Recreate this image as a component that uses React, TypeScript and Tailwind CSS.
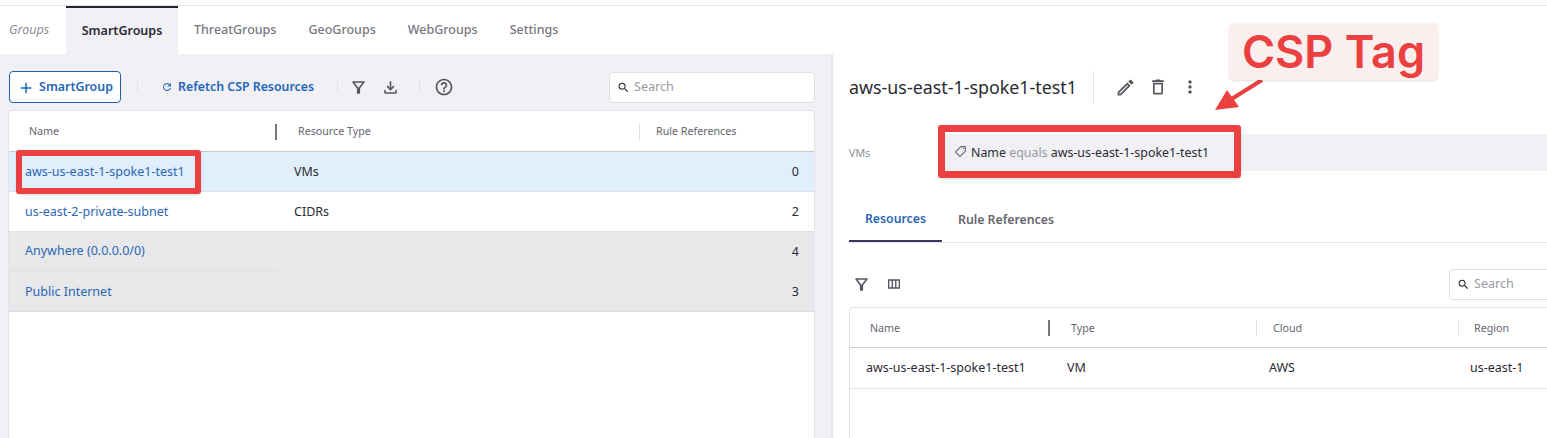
import {
  MdAdd,
  MdHelpOutline,
  MdMoreVert,
  MdOutlineDelete,
  MdOutlineEdit,
  MdOutlineFileDownload,
  MdOutlineFilterAlt,
  MdOutlineLocalOffer,
  MdOutlineViewColumn,
  MdRefresh,
  MdSearch,
} from "react-icons/md";

const font = "font-['Noto_Sans',sans-serif]";

function Divider({ className }: { className: string }) {
  return <div className={"w-px shrink-0 bg-[#dfdfe4] " + className} />;
}

function SearchBox({ className }: { className: string }) {
  return (
    <div className={"flex h-[31px] items-center gap-[4px] rounded-[4px] border border-[#dedee3] bg-white pl-[7px] " + className}>
      <MdSearch size={13} className="text-[#2b2b33]" />
      <span className="pt-[1px] text-[12.6px] text-[#9a9aa2]">Search</span>
    </div>
  );
}

const groups = [
  { name: "aws-us-east-1-spoke1-test1", type: "VMs", refs: 0, bg: "bg-[#e1eefb]", line: "border-[#e2e2e6]", nameLine: "" },
  { name: "us-east-2-private-subnet", type: "CIDRs", refs: 2, bg: "bg-white", line: "border-[#e2e2e6]", nameLine: "" },
  { name: "Anywhere (0.0.0.0/0)", type: "", refs: 4, bg: "bg-[#e8e8ea]", line: "border-transparent", nameLine: "border-b border-[#dfdfe2]" },
  { name: "Public Internet", type: "", refs: 3, bg: "bg-[#e8e8ea]", line: "border-[#dedee2]", nameLine: "" },
];

export default function App() {
  return (
    <div className={"relative flex h-[438px] w-[1547px] flex-col overflow-hidden bg-white text-[#2b2b33] " + font}>
      <div className="mt-[5px] h-px bg-[#e4e4e6]" />

      {/* tabs */}
      <div className="flex h-[48px] items-center text-[12.5px]">
        <span className="w-[66px] pl-[9px] pt-[1px] italic text-[#8d8d95]">Groups</span>
        <div className="flex h-full w-[112px] items-center justify-center border-t-2 border-[#23233a] bg-[#f0f0f5] font-semibold text-[#2b2b33]">
          SmartGroups
        </div>
        <div className="ml-[16px] flex gap-[32px] pt-[1px] font-medium text-[#77777f]">
          <span>ThreatGroups</span>
          <span>GeoGroups</span>
          <span>WebGroups</span>
          <span>Settings</span>
        </div>
      </div>

      <div className="flex flex-1">
        {/* left panel */}
        <div className="flex w-[833px] flex-col border-r-2 border-[#e6e6ee] bg-[#f0f0f5] pl-[9px] pr-[16px] pt-[17px]">
          <div className="flex h-[39px] items-center pb-[7px]">
            <div className="flex h-[32px] w-[112px] items-center justify-center rounded-[4px] border border-[#1f5fb0] bg-white pt-[1px] text-[12.4px] font-semibold text-[#2266bb]">
              <MdAdd size={18} className="mr-[4px]" />
              SmartGroup
            </div>
            <Divider className="ml-[16px] h-[12px]" />
            <div className="ml-[23px] flex items-center gap-[5px] pt-[1px] text-[12.35px] font-semibold text-[#2266bb]">
              <MdRefresh size={12} />
              Refetch CSP Resources
            </div>
            <Divider className="ml-[23px] h-[12px]" />
            <MdOutlineFilterAlt size={19} className="ml-[11px] text-[#55555e]" />
            <MdOutlineFileDownload size={19} className="ml-[13px] text-[#55555e]" />
            <Divider className="ml-[19px] h-[12px]" />
            <MdHelpOutline size={20} className="ml-[14px] text-[#55555e]" />
            <SearchBox className="ml-auto w-[206px]" />
          </div>

          <div className="-ml-[1px] flex-1 rounded-t-[4px] border-l border-r border-t border-[#e2e2e8] bg-white">
            <div className="flex h-[41px] items-center border-b border-[#c9cbd4] pt-[1px] text-[10.7px] text-[#66666e]">
              <span className="w-[266px] pl-[20px]">Name</span>
              <div className="h-[16px] w-[2px] bg-[#77777f]" />
              <span className="w-[362px] pl-[21px]">Resource Type</span>
              <Divider className="h-[16px]" />
              <span className="pl-[16px]">Rule References</span>
            </div>
            {groups.map((g) => (
              <div key={g.name} className={"flex h-[40px] items-stretch border-b text-[12.5px] " + g.bg + " " + g.line}>
                <span className={"flex w-[269px] items-center pl-[16px] pt-[1px] text-[#2a67b5] " + g.nameLine}>{g.name}</span>
                <span className="flex flex-1 items-center pl-[16px] pt-[1px] text-[#2b2b33]">{g.type}</span>
                <span className="flex items-center pr-[15px] pt-[1px] text-[#2b2b33]">{g.refs}</span>
              </div>
            ))}
          </div>
        </div>

        {/* right panel */}
        <div className="flex flex-1 flex-col pl-[16px]">
          <div className="flex h-[66px] items-center">
            <span className="w-[244px] text-[17.85px] text-[#2b2b33]">aws-us-east-1-spoke1-test1</span>
            <Divider className="h-[32px]" />
            <MdOutlineEdit size={21} className="ml-[21px] text-[#55555e]" />
            <MdOutlineDelete size={20} className="ml-[12px] text-[#55555e]" />
            <MdMoreVert size={20} className="ml-[12px] text-[#55555e]" />
          </div>

          <div className="mt-[14px] flex h-[37px] items-center text-[10.7px]">
            <span className="w-[91px] pt-[1px] text-[#8d8d95]">VMs</span>
            <div className="flex h-full flex-1 items-center bg-[#f0f0f5] pl-[14px] text-[12.4px]">
              <MdOutlineLocalOffer size={13} className="-mt-[2px] -scale-x-100 text-[#66666e]" />
              <span className="ml-[4px] pt-[1px]">
                Name <span className="text-[#9a9aa2]">equals</span> aws-us-east-1-spoke1-test1
              </span>
            </div>
          </div>

          <div className="mt-[24px] flex h-[48px] border-b border-[#e4e4e6] text-[12.3px] font-semibold">
            <div className="flex w-[93px] items-center justify-center border-b-2 border-[#3a3565] pt-[4px] text-[#2a67b5]">Resources</div>
            <div className="flex items-center pl-[16px] pt-[3px] text-[#66666e]">Rule References</div>
          </div>

          <div className="flex h-[64px] items-center pt-[18px]">
            <MdOutlineFilterAlt size={19} className="ml-[3px] text-[#55555e]" />
            <MdOutlineViewColumn size={16} className="ml-[15px] text-[#55555e]" />
            <SearchBox className="ml-auto -mr-[40px] w-[138px]" />
          </div>

          <div className="flex-1 rounded-tl-[4px] border-l border-t border-[#e2e2e8]">
            <div className="flex h-[40px] items-center border-b border-[#cfcfd4] pt-[1px] text-[10.7px] text-[#66666e]">
              <span className="w-[198px] pl-[20px]">Name</span>
              <div className="h-[16px] w-[2px] bg-[#77777f]" />
              <span className="w-[206px] pl-[21px]">Type</span>
              <Divider className="h-[16px]" />
              <span className="w-[201px] pl-[16px]">Cloud</span>
              <Divider className="h-[16px]" />
              <span className="pl-[15px]">Region</span>
            </div>
            <div className="flex h-[41px] items-center border-b border-[#e4e4e6] pt-[1px] text-[12.5px]">
              <span className="w-[217px] pl-[16px]">aws-us-east-1-spoke1-test1</span>
              <span className="w-[202px]">VM</span>
              <span className="w-[201px]">AWS</span>
              <span>us-east-1</span>
            </div>
          </div>
        </div>
      </div>

      {/* screenshot annotations */}
      <div className="absolute left-[16px] top-[150px] h-[44px] w-[185px] rounded-[3px] border-[6px] border-[#ea4040] shadow-sm" />
      <div className="absolute left-[938px] top-[125px] h-[53px] w-[303px] rounded-[3px] border-[7px] border-[#ea4040] shadow-sm" />
      <svg className="absolute left-[1210px] top-[76px]" width="60" height="40" viewBox="0 0 60 40">
        <path d="M52 4 20 24" stroke="#ea4040" strokeWidth="4" />
        <path d="M5 34 17 14 29 31z" fill="#ea4040" />
      </svg>
      <div className="absolute left-[1229px] top-[23px] flex h-[57px] w-[209px] items-center justify-center rounded-[5px] bg-[#fbeeee] text-[45px] font-semibold text-[#ea4040] shadow-sm font-['Inter',sans-serif]">
        CSP Tag
      </div>
    </div>
  );
}
